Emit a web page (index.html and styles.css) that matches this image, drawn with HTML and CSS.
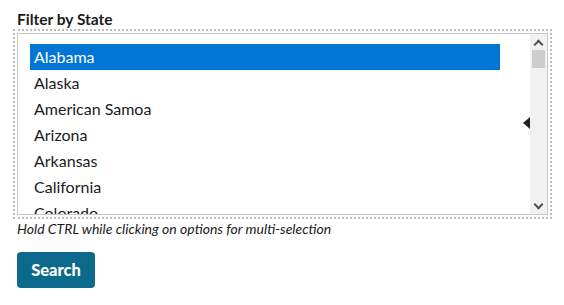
FILE: index.html
```html
<!DOCTYPE html>
<html lang="en">
<head>
  <meta charset="UTF-8" />
  <title>Filter by State</title>
  <link rel="stylesheet" href="styles.css">
</head>
<body>
  <form class="filter" onsubmit="return false;">
    <label class="filter-label" for="stateList">Filter by State</label>
    <div class="state-select" id="stateList" tabindex="0">
      <ul class="options">
        <li class="selected">Alabama</li>
        <li>Alaska</li>
        <li>American Samoa</li>
        <li>Arizona</li>
        <li>Arkansas</li>
        <li>California</li>
        <li class="partial">Colorado</li>
      </ul>
      <div class="scrollbar">
        <span class="arrow up"></span>
        <span class="thumb"></span>
        <span class="track"></span>
        <span class="arrow down"></span>
      </div>
      <span class="cursor"></span>
    </div>
    <p class="hint">Hold CTRL while clicking on options for multi-selection</p>
    <button class="btn-search">Search</button>
  </form>
</body>
</html>
```
FILE: styles.css
```css
* {
  box-sizing: border-box; margin: 0; padding: 0;
}

body {
  background: white;
  font-family: Lato, "Liberation Sans", sans-serif;
  color: #1b1b1b;
}

.filter {
  padding: 9px 0 0 17px;
}

.filter-label {
  display: block;
  font-size: 15.5px;
  font-weight: bold;
  line-height: 20px;
  margin-bottom: 4px;
}

.state-select {
  position: relative;
  display: flex;
  width: 531px;
  height: 182px;
  border: 1px solid #c6c6c6;
  outline: 2px dotted #bcbcbc;
  outline-offset: 2px;
  overflow: hidden;
}

.options {
  list-style: none;
  flex: 1;
  padding: 10px 30px 0 12px;
}

.options li {
  height: 26px;
  line-height: 26px;
  padding-left: 4px;
  font-size: 16px;
}

/* last row is scrolled half out of view */
.options li.partial {
  height: 14px;
  overflow: hidden;
}

.options li.selected {
  background: #0075d6;
  color: #fff;
}

.scrollbar {
  width: 17px;
  background: #f1f1f1;
  display: flex;
  flex-direction: column;
}

.scrollbar .arrow {
  height: 16px;
  display: flex;
  align-items: center;
  justify-content: center;
}

.scrollbar .arrow::before {
  content: "";
  width: 5px;
  height: 5px;
  border-left: 2px solid #505050;
  border-top: 2px solid #505050;
}

.scrollbar .up::before {
  transform: translateY(2px) rotate(45deg);
}

.scrollbar .down::before {
  transform: translateY(-2px) rotate(225deg);
}

.thumb {
  height: 18px;
  margin: 0 2px;
  background: #cdcdcd;
}

.track {
  flex: 1;
}

.cursor {
  position: absolute;
  left: 505px;
  top: 83px;
  width: 0;
  height: 0;
  border-top: 6px solid transparent;
  border-bottom: 6px solid transparent;
  border-right: 7px solid #222;
}

.hint {
  font-size: 14px;
  font-style: italic;
  line-height: 18px;
  margin-top: 5px;
}

.btn-search {
  margin-top: 14px;
  width: 78px;
  height: 36px;
  background: #0b6a8b;
  color: #fff;
  border: none;
  border-radius: 4px;
  font-family: Lato, "Liberation Sans", sans-serif;
  font-size: 16.5px;
  font-weight: 900;
  cursor: pointer;
}
```
